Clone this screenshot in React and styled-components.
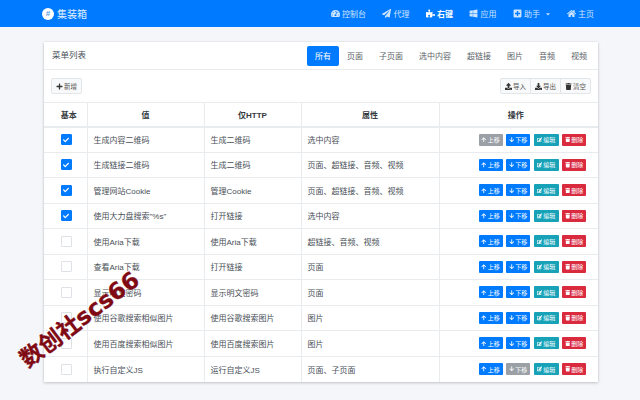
import React from 'react';
import styled, { createGlobalStyle } from 'styled-components';
import {
  FaTachometerAlt, FaPaperPlane, FaPuzzlePiece, FaWindows, FaPlusSquare, FaHome,
  FaPlus, FaUpload, FaDownload, FaTrash, FaArrowUp, FaArrowDown, FaEdit, FaCheck, FaCaretDown,
} from 'react-icons/fa';

const GlobalStyle = createGlobalStyle`
  html, body { margin: 0; padding: 0; background: #f4f6f9; }
  body {
    width: 640px;
    height: 400px;
    overflow: hidden;
    font-family: "Liberation Sans", "Noto Sans CJK SC", sans-serif;
    color: #212529;
  }
  * { box-sizing: border-box; }
`;

const Page = styled.div`
  position: relative;
  width: 640px;
  height: 400px;
  overflow: hidden;
`;

const Navbar = styled.nav`
  height: 27px;
  background: #007bff;
  display: flex;
  align-items: center;
  justify-content: space-between;
  padding: 0 46px 0 42px;
  color: #fff;
`;

const Brand = styled.div`
  display: flex;
  align-items: center;
  gap: 3px;
  font-size: 10px;
  color: rgba(255,255,255,.9);
`;

const BrandMark = styled.span`
  width: 12px;
  height: 12px;
  border-radius: 50%;
  background: #fff;
  color: #5a9fe8;
  font-size: 8px;
  font-weight: 700;
  display: flex;
  align-items: center;
  justify-content: center;
`;

const NavList = styled.div`
  display: flex;
  align-items: center;
  gap: 16px;
`;

const NavLink = styled.span`
  display: flex;
  align-items: center;
  gap: 2.5px;
  font-size: 8px;
  color: ${p => (p.$active ? '#fff' : 'rgba(255,255,255,.8)')};
  font-weight: ${p => (p.$active ? 600 : 400)};
  svg { font-size: 9px; }
`;

const Caret = styled(FaCaretDown)`
  margin-left: 2px;
  font-size: 6px !important;
`;

const Card = styled.section`
  margin: 15px 42px 0 44px;
  width: 554px;
  height: 340px;
  background: #fff;
  box-shadow: 0 0 1px rgba(0,0,0,.13), 0 1px 3px rgba(0,0,0,.2);
`;

const CardHeader = styled.header`
  height: 28px;
  display: flex;
  align-items: center;
  justify-content: space-between;
  padding: 0 3px 0 8px;
  border-bottom: 1px solid #e9ecef;
`;

const CardTitle = styled.h3`
  margin: 0 0 4px;
  font-size: 8.5px;
  font-weight: 400;
  color: #495057;
`;

const Tabs = styled.div`
  display: flex;
  align-items: center;
`;

const Tab = styled.span`
  height: 20px;
  padding: 0 8px;
  border-radius: 2px;
  display: flex;
  align-items: center;
  font-size: 8px;
  background: ${p => (p.$active ? '#007bff' : 'transparent')};
  color: ${p => (p.$active ? '#fff' : '#5a6268')};
`;

const Toolbar = styled.div`
  height: 32px;
  display: flex;
  align-items: center;
  justify-content: space-between;
  padding: 0 7px;
`;

const ToolButton = styled.span`
  width: 31px;
  height: 16px;
  display: inline-flex;
  align-items: center;
  justify-content: center;
  gap: 1px;
  font-size: 6.5px;
  color: #555;
  background: #f8f9fa;
  border: 1px solid #e3e6e9;
  border-radius: ${p => p.$radius || '2px'};
  margin-left: ${p => (p.$joined ? '-1px' : 0)};
  svg { font-size: 7px; color: #333; }
`;

const ToolGroup = styled.div`
  display: flex;
`;

const Table = styled.table`
  width: 554px;
  table-layout: fixed;
  border-collapse: collapse;
  font-size: 8px;
  color: #495057;
  th, td { border: 1px solid #e9ecef; padding: 0; vertical-align: middle; }
  tr > :first-child { border-left: 0; }
  tr > :last-child { border-right: 0; }
  tbody tr:last-child td { border-bottom: 0; }
`;

const HeadRow = styled.tr`
  height: 24px;
  th {
    text-align: center;
    font-weight: 600;
    color: #343a40;
    border-bottom: 2px solid #e9ecef;
  }
  th:first-child { padding-left: 7px; }
  th:last-child { padding-right: 6px; }
`;

const Row = styled.tr`
  height: 25.5px;
`;

const TextCell = styled.td`
  padding-left: 6px !important;
`;

const CheckCell = styled.td`
  text-align: center;
  padding-left: 2px !important;
`;

const Check = styled.span`
  width: 11px;
  height: 11px;
  display: inline-flex;
  align-items: center;
  justify-content: center;
  vertical-align: middle;
  border-radius: 1px;
  background: ${p => (p.$on ? '#007bff' : '#fff')};
  border: 1px solid ${p => (p.$on ? '#007bff' : '#dee2e6')};
  color: #fff;
  font-size: 6px;
`;

const Actions = styled.div`
  display: flex;
  justify-content: flex-end;
  gap: 3.5px;
  padding-right: 12px;
`;

const ActionButton = styled.span`
  height: 12px;
  width: ${p => p.$w}px;
  display: inline-flex;
  align-items: center;
  justify-content: center;
  gap: 1px;
  font-size: 6px;
  color: #fff;
  border-radius: 1px;
  background: ${p => p.$bg};
  svg { font-size: 5.5px; }
`;

// 水印盖在表格上
const Watermark = styled.div`
  position: absolute;
  left: 23px;
  top: 351px;
  transform: rotate(-37deg);
  transform-origin: left center;
  white-space: nowrap;
  font-family: "DejaVu Sans", "Noto Sans CJK SC", sans-serif;
  font-size: 23px;
  font-weight: 700;
  line-height: 1;
  color: #7f0a14;
  -webkit-text-stroke: 0.3px #7f0a14;
`;

const colWidths = [43, 117, 97, 138, 159];

const rows = [
  ['生成内容二维码', '生成二维码', '选中内容', true],
  ['生成链接二维码', '生成二维码', '页面、超链接、音频、视频', true],
  ['管理网站Cookie', '管理Cookie', '页面、超链接、音频、视频', true],
  ['使用大力盘搜索"%s"', '打开链接', '选中内容', true],
  ['使用Aria下载', '使用Aria下载', '超链接、音频、视频', false],
  ['查看Aria下载', '打开链接', '页面', false],
  ['显示明文密码', '显示明文密码', '页面', false],
  ['使用谷歌搜索相似图片', '使用谷歌搜索图片', '图片', false],
  ['使用百度搜索相似图片', '使用百度搜索图片', '图片', false],
  ['执行自定义JS', '运行自定义JS', '页面、子页面', false],
];

const navItems = [
  [FaTachometerAlt, '控制台'],
  [FaPaperPlane, '代理'],
  [FaPuzzlePiece, '右键', true],
  [FaWindows, '应用'],
  [FaPlusSquare, '助手', false, true],
  [FaHome, '主页'],
];

const tabs = ['所有', '页面', '子页面', '选中内容', '超链接', '图片', '音频', '视频'];

const App = () => (
  <Page>
    <GlobalStyle />
    <Navbar>
      <Brand><BrandMark>#</BrandMark>集装箱</Brand>
      <NavList>
        {navItems.map(([Icon, label, active, caret]) => (
          <NavLink key={label} $active={active}>
            <Icon />{label}{caret && <Caret />}
          </NavLink>
        ))}
      </NavList>
    </Navbar>
    <Card>
      <CardHeader>
        <CardTitle>菜单列表</CardTitle>
        <Tabs>
          {tabs.map((t, i) => <Tab key={t} $active={i === 0}>{t}</Tab>)}
        </Tabs>
      </CardHeader>
      <Toolbar>
        <ToolButton><FaPlus />新增</ToolButton>
        <ToolGroup>
          <ToolButton $radius="2px 0 0 2px"><FaUpload />导入</ToolButton>
          <ToolButton $radius="0" $joined><FaDownload />导出</ToolButton>
          <ToolButton $radius="0 2px 2px 0" $joined><FaTrash />清空</ToolButton>
        </ToolGroup>
      </Toolbar>
      <Table>
        <colgroup>{colWidths.map((w, i) => <col key={i} width={w} />)}</colgroup>
        <thead>
          <HeadRow>
            <th>基本</th><th>值</th><th>仅HTTP</th><th>属性</th><th>操作</th>
          </HeadRow>
        </thead>
        <tbody>
          {rows.map(([value, http, attr, on], i) => (
            <Row key={value}>
              <CheckCell><Check $on={on}>{on && <FaCheck />}</Check></CheckCell>
              <TextCell>{value}</TextCell>
              <TextCell>{http}</TextCell>
              <TextCell>{attr}</TextCell>
              <td>
                <Actions>
                  <ActionButton $w={24} $bg={i === 0 ? '#9aa0a6' : '#007bff'}><FaArrowUp />上移</ActionButton>
                  <ActionButton $w={24} $bg={i === rows.length - 1 ? '#9aa0a6' : '#007bff'}><FaArrowDown />下移</ActionButton>
                  <ActionButton $w={25} $bg="#17a2b8"><FaEdit />编辑</ActionButton>
                  <ActionButton $w={24} $bg="#d92a3e"><FaTrash />删除</ActionButton>
                </Actions>
              </td>
            </Row>
          ))}
        </tbody>
      </Table>
    </Card>
    <Watermark>数创社scs66</Watermark>
  </Page>
);

export default App;
